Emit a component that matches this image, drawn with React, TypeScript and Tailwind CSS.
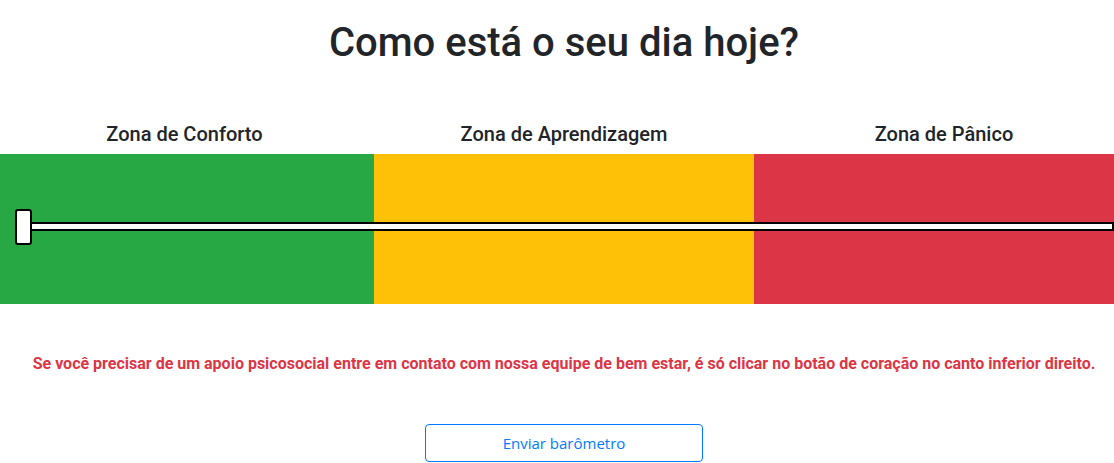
export default function App() {
  return (
    <div
      className="w-[1114px] h-[463px] overflow-hidden bg-white text-[#212529]"
      style={{ fontFamily: "Roboto, 'Liberation Sans', sans-serif" }}
    >
      <h1 className="pt-[19px] pl-[14px] text-center text-[40px] leading-[48px] font-medium">
        Como está o seu dia hoje?
      </h1>

      <div className="mt-[55px] flex">
        <div className="w-[369px] text-center text-[20px] leading-6 font-medium">Zona de Conforto</div>
        <div className="w-[390px] text-center text-[20px] leading-6 font-medium">Zona de Aprendizagem</div>
        <div className="w-[355px] pl-[15px] text-center text-[20px] leading-6 font-medium">Zona de Pânico</div>
      </div>

      {/* barometer */}
      <div className="relative mt-2 flex h-[150px]">
        <div className="w-[374px] bg-[#28a745]" />
        <div className="w-[380px] bg-[#ffc107]" />
        <div className="w-[360px] bg-[#dc3545]" />

        <div className="absolute left-[15px] right-0 top-[68px] h-[9px] border-2 border-black bg-white" />
        <div className="absolute left-[15px] top-[55px] h-[36px] w-[17px] rounded-[3px] border-2 border-black bg-white" />
      </div>

      <p className="mt-[48px] pl-[14px] text-center text-[16px] leading-6 font-bold text-[#dc3545]">
        Se você precisar de um apoio psicosocial entre em contato com nossa equipe de bem estar, é só clicar no botão de coração no canto inferior direito.
      </p>

      <div className="mt-[48px] pl-[14px] flex justify-center">
        <button
          className="h-[38px] w-[278px] rounded-[4px] border border-[#007bff] text-[15px] text-[#007bff]"
          style={{ fontFamily: "'Open Sans', 'Noto Sans', sans-serif" }}
        >
          Enviar barômetro
        </button>
      </div>
    </div>
  );
}
